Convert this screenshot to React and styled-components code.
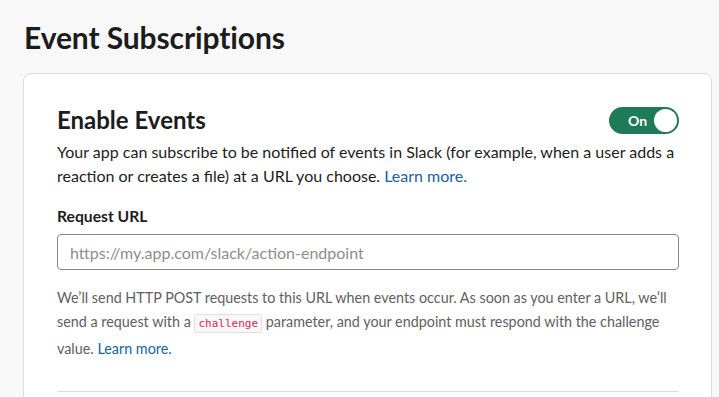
import React from 'react';
import styled, { createGlobalStyle } from 'styled-components';

const GlobalStyle = createGlobalStyle`
  html, body {
    margin: 0;
    padding: 0;
    background: #f8f8f8;
    font-family: Lato, 'Noto Sans', sans-serif;
    color: #1d1c1d;
  }
`;

const Page = styled.div`
  padding: 14px 7px 0 23px;
  height: 397px;
  box-sizing: border-box;
  overflow: hidden;
`;

const Title = styled.h1`
  margin: 0 0 13px 1px;
  font-size: 30px;
  line-height: 46px;
  font-weight: 700;
  letter-spacing: -0.1px;
`;

const Card = styled.section`
  background: #fff;
  border: 1px solid #dddddd;
  border-radius: 8px;
  padding: 31px 32px 0 33px;
  min-height: 400px;
`;

const Header = styled.div`
  display: flex;
  align-items: center;
  justify-content: space-between;
`;

const Heading = styled.h2`
  margin: 0;
  font-size: 24px;
  line-height: 30px;
  font-weight: 700;
`;

const Toggle = styled.button`
  display: flex;
  align-items: center;
  justify-content: space-between;
  width: 70px;
  height: 27px;
  padding: 0 2px 0 19px;
  border: none;
  border-radius: 14px;
  background: #1f7a57;
  color: #fff;
  font-family: inherit;
  font-weight: 700;
  font-size: 14px;
  box-sizing: border-box;
`;

const Knob = styled.span`
  width: 23px;
  height: 23px;
  border-radius: 50%;
  background: #fff;
`;

const Description = styled.p`
  margin: 5px 0 0;
  font-size: 16px;
  line-height: 24px;
`;

const Link = styled.a`
  color: #1264a3;
  text-decoration: none;
`;

const Label = styled.label`
  display: block;
  margin-top: 16px;
  font-size: 15.7px;
  font-weight: 700;
  line-height: 24px;
`;

const Input = styled.input`
  display: block;
  width: 100%;
  height: 36px;
  margin-top: 6px;
  box-sizing: border-box;
  border: 1px solid #868686;
  border-radius: 4px;
  padding: 0 12px;
  font-family: inherit;
  font-size: 16px;
  color: #1d1c1d;
  &::placeholder {
    color: #8d8d8d;
  }
`;

const Help = styled.p`
  margin: 16px 0 0;
  font-size: 14.35px;
  line-height: 24.3px;
  color: #616061;
`;

const Code = styled.code`
  font-family: 'DejaVu Sans Mono', 'Liberation Mono', monospace;
  font-size: 11px;
  color: #e01e5a;
  background: #f8f8f8;
  border: 1px solid #e0e0e0;
  border-radius: 3px;
  padding: 2px 3px;
`;

const Divider = styled.hr`
  margin: 30px 0 0;
  border: none;
  border-top: 1px solid #dddddd;
`;

export default function App() {
  return (
    <>
      <GlobalStyle />
      <Page>
        <Title>Event Subscriptions</Title>
        <Card>
          <Header>
            <Heading>Enable Events</Heading>
            <Toggle>
              On
              <Knob />
            </Toggle>
          </Header>
          <Description>
            Your app can subscribe to be notified of events in Slack (for example, when a user adds a
            reaction or creates a file) at a URL you choose. <Link href="#">Learn more.</Link>
          </Description>
          <Label>Request URL</Label>
          <Input placeholder="https://my.app.com/slack/action-endpoint" />
          <Help>
            We’ll send HTTP POST requests to this URL when events occur. As soon as you enter a URL, we’ll
            send a request with a <Code>challenge</Code> parameter, and your endpoint must respond with the
            challenge value. <Link href="#">Learn more.</Link>
          </Help>
          <Divider />
        </Card>
      </Page>
    </>
  );
}
